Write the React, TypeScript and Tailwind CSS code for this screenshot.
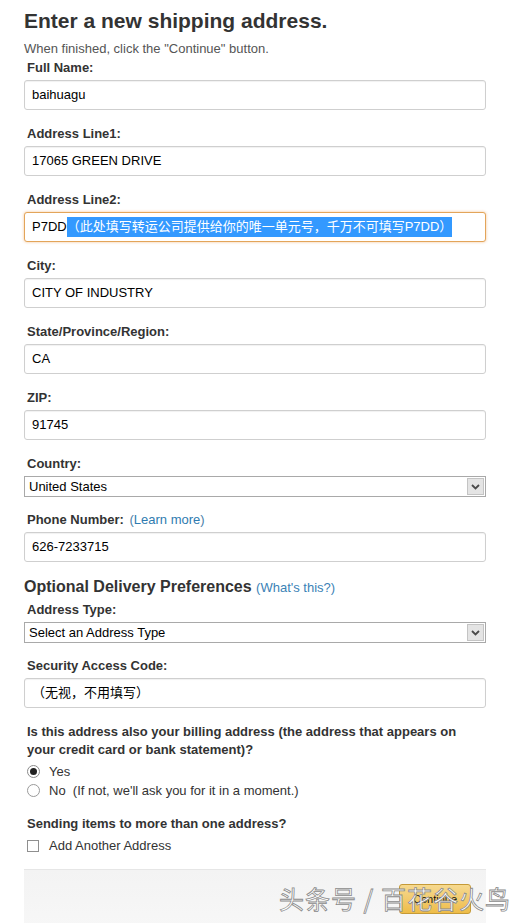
import React from 'react';

const font = { fontFamily: '"Liberation Sans", Arial, "Noto Sans CJK SC", sans-serif' };

function Label({ children }: { children: React.ReactNode }) {
  return <div className="pl-[3px] h-4 leading-4 text-[13px] font-bold text-[#333] mb-1">{children}</div>;
}

function TextBox({ children, focused = false }: { children: React.ReactNode; focused?: boolean }) {
  return (
    <div
      className={
        'h-[30px] w-[462px] rounded-[3px] border bg-white px-[7px] flex items-center text-[13px] text-black whitespace-nowrap ' +
        (focused
          ? 'border-[#e3a55a] shadow-[0_0_3px_rgba(228,121,17,0.45)]'
          : 'border-[#cfcfcf] shadow-[inset_0_1px_1px_rgba(0,0,0,0.06)]')
      }
    >
      {children}
    </div>
  );
}

function Field({ label, value, focused }: { label: React.ReactNode; value: React.ReactNode; focused?: boolean }) {
  return (
    <div className="mb-4">
      <Label>{label}</Label>
      <TextBox focused={focused}>{value}</TextBox>
    </div>
  );
}

function SelectBox({ value }: { value: string }) {
  return (
    <div className="h-[21px] w-[462px] border border-[#a9a9a9] bg-white flex items-center justify-between pl-1 pr-[1px] text-[13px] text-black">
      <span>{value}</span>
      <span className="h-[17px] w-[17px] bg-[#e4e4e4] border border-[#c4c4c4] flex items-center justify-center">
        <svg width="9" height="6" viewBox="0 0 9 6">
          <path d="M1 1 L4.5 4.5 L8 1" stroke="#4a4a4a" strokeWidth="1.8" fill="none" />
        </svg>
      </span>
    </div>
  );
}

export default function App() {
  return (
    <div className="relative w-[525px] h-[923px] overflow-hidden bg-white text-[#333]" style={font}>
      <div className="pl-6 pt-[9px]">
        <h1 className="text-[21px] font-bold leading-6 text-[#333]">Enter a new shipping address.</h1>
        <p className="mt-[8px] text-[13px] leading-[15px] text-[#555]">When finished, click the "Continue" button.</p>

        <div className="mt-[4px]">
          <Field label="Full Name:" value="baihuagu" />
          <Field label="Address Line1:" value="17065 GREEN DRIVE" />
          <Field
            label="Address Line2:"
            focused
            value={
              <>
                P7DD
                <span className="bg-[#3399ff] text-white">（此处填写转运公司提供给你的唯一单元号，千万不可填写P7DD）</span>
              </>
            }
          />
          <Field label="City:" value="CITY OF INDUSTRY" />
          <Field label="State/Province/Region:" value="CA" />
          <Field label="ZIP:" value="91745" />

          <div className="mb-[15px]">
            <Label>Country:</Label>
            <SelectBox value="United States" />
          </div>

          <Field
            label={
              <>
                Phone Number:{' '}
                <span className="font-normal text-[13px] text-[#4a7fa8] ml-[2px]">
                  (<span className="text-[#2f7bb0]">Learn more</span>)
                </span>
              </>
            }
            value="626-7233715"
          />
        </div>

        <div className="mt-[-2px] h-[22px] leading-[22px] text-[16px] font-bold text-[#333]">
          Optional Delivery Preferences{' '}
          <span className="font-normal text-[13px] text-[#3b82b6]">(What's this?)</span>
        </div>

        <div className="mt-[4px] mb-[15px]">
          <Label>Address Type:</Label>
          <SelectBox value="Select an Address Type" />
        </div>

        <Field label="Security Access Code:" value="（无视，不用填写）" />

        <div className="mt-[-1px] pl-[3px] text-[13px] font-bold leading-[18px] text-[#333]">
          Is this address also your billing address (the address that appears on
          <br />
          your credit card or bank statement)?
        </div>

        <div className="pl-[3px] mt-[3px] text-[13px] text-[#333]">
          <div className="flex items-center h-[19px]">
            <span className="w-[13px] h-[13px] rounded-full border border-[#8a8a8a] bg-white flex items-center justify-center">
              <span className="w-[7px] h-[7px] rounded-full bg-[#222]" />
            </span>
            <span className="ml-[9px]">Yes</span>
          </div>
          <div className="flex items-center h-[19px]">
            <span className="w-[13px] h-[13px] rounded-full border border-[#9a9a9a] bg-white" />
            <span className="ml-[9px]">No&nbsp; (If not, we'll ask you for it in a moment.)</span>
          </div>
        </div>

        <div className="mt-[16px] pl-[3px] h-4 leading-4 text-[13px] font-bold text-[#333]">Sending items to more than one address?</div>
        <div className="pl-[3px] mt-[6px] flex items-center h-4 text-[13px] text-[#333]">
          <span className="w-[12px] h-[12px] border border-[#8f8f8f] bg-white" />
          <span className="ml-[10px]">Add Another Address</span>
        </div>

        <div className="mt-[15px] w-[462px] h-[60px] border-t border-[#e6e6e6] bg-gradient-to-b from-[#f3f3f3] to-[#f7f7f7] flex justify-end pt-[14px] pr-[15px]">
          <div className="h-[30px] w-[72px] rounded-[3px] border border-[#c59a37] bg-gradient-to-b from-[#f6d98f] to-[#eebc47] flex items-center justify-center text-[11px] text-[#111]">
            Continue
          </div>
        </div>
      </div>

      <div
        className="absolute left-[279px] top-[882px] text-[25px] leading-8 text-white tracking-[1px] [-webkit-text-stroke:0.8px_#8a8a8a]"
        style={{ fontFamily: '"Noto Sans CJK SC", sans-serif' }}
      >
        头条号 / 百花谷火鸟
      </div>
    </div>
  );
}
